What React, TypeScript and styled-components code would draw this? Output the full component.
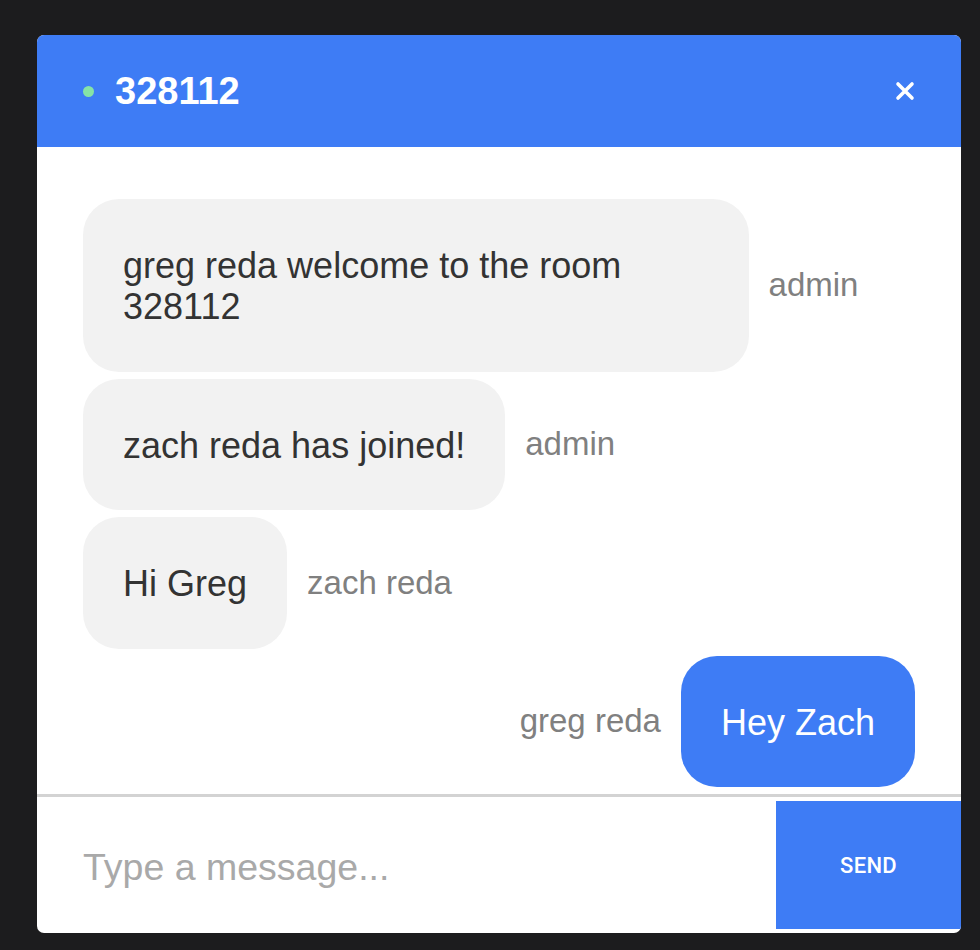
import React from "react";
import styled, { createGlobalStyle } from "styled-components";

const GlobalStyle = createGlobalStyle`
  html, body {
    margin: 0;
    padding: 0;
    background: #1c1c1e;
    font-family: "Liberation Sans", Arial, sans-serif;
  }
  * { box-sizing: border-box; }
`;

const Page = styled.div`
  padding: 35px 19px 17px 37px;
  min-height: 950px;
`;

const Card = styled.div`
  width: 924px;
  height: 898px;
  background: #ffffff;
  border-radius: 7px;
  overflow: hidden;
  display: flex;
  flex-direction: column;
`;

const Header = styled.header`
  height: 112px;
  flex: none;
  background: #3e7cf5;
  display: flex;
  align-items: center;
  padding: 0 46px 0 46px;
`;

const StatusDot = styled.span`
  width: 11px;
  height: 11px;
  border-radius: 50%;
  background: #86e3a6;
  margin-right: 21px;
  flex: none;
`;

const Title = styled.h1`
  margin: 0;
  flex: 1;
  color: #ffffff;
  font-size: 38px;
  font-weight: 700;
  line-height: 1;
`;

const CloseButton = styled.button`
  border: none;
  background: none;
  padding: 0;
  width: 20px;
  height: 20px;
  display: flex;
  align-items: center;
  justify-content: center;
  cursor: pointer;
`;

const Messages = styled.div`
  flex: 1;
  display: flex;
  flex-direction: column;
  gap: 7px;
  padding: 52px 46px 6px;
  overflow: hidden;
`;

const Row = styled.div<{ $own?: boolean }>`
  display: flex;
  align-items: center;
  gap: 20px;
  justify-content: ${(p) => (p.$own ? "flex-end" : "flex-start")};
`;

const Bubble = styled.div<{ $own?: boolean }>`
  max-width: 80%;
  padding: 46px 40px 44px;
  border-radius: 36px;
  font-size: 36px;
  line-height: 1.15;
  background: ${(p) => (p.$own ? "#3e7cf5" : "#f2f2f2")};
  color: ${(p) => (p.$own ? "#ffffff" : "#333333")};
`;

const Sender = styled.span`
  font-size: 33px;
  color: #808080;
  white-space: nowrap;
`;

const Footer = styled.form`
  flex: none;
  border-top: 3px solid #d3d3d3;
  padding: 4px 0 4px 0;
  display: flex;
  align-items: stretch;
`;

const Input = styled.input`
  flex: 1;
  min-width: 0;
  border: none;
  outline: none;
  padding: 4px 20px 0 46px;
  font-family: "Liberation Sans", Arial, sans-serif;
  font-size: 37.5px;
  color: #333333;
  caret-color: #000000;
  background: transparent;
  &::placeholder {
    color: #a9a9a9;
  }
`;

const SendButton = styled.button`
  width: 185px;
  height: 128px;
  flex: none;
  border: none;
  background: #3e7cf5;
  color: #ffffff;
  font-family: Roboto, "Liberation Sans", Arial, sans-serif;
  font-weight: 500;
  font-size: 22px;
  letter-spacing: 0.3px;
  cursor: pointer;
`;

type Msg = { text: string; user: string; own?: boolean };

const messages: Msg[] = [
  { text: "greg reda welcome to the room 328112", user: "admin" },
  { text: "zach reda has joined!", user: "admin" },
  { text: "Hi Greg", user: "zach reda" },
  { text: "Hey Zach", user: "greg reda", own: true },
];

export default function App() {
  return (
    <>
      <GlobalStyle />
      <Page>
        <Card>
          <Header>
            <StatusDot />
            <Title>328112</Title>
            <CloseButton aria-label="close">
              <svg width="20" height="20" viewBox="0 0 20 20">
                <path
                  d="M3 3 L17 17 M17 3 L3 17"
                  stroke="#ffffff"
                  strokeWidth="3.6"
                  strokeLinecap="round"
                />
              </svg>
            </CloseButton>
          </Header>
          <Messages>
            {messages.map((m, i) => (
              <Row key={i} $own={m.own}>
                {m.own && <Sender>{m.user}</Sender>}
                <Bubble $own={m.own}>{m.text}</Bubble>
                {!m.own && <Sender>{m.user}</Sender>}
              </Row>
            ))}
          </Messages>
          <Footer onSubmit={(e) => e.preventDefault()}>
            <Input placeholder="Type a message..." autoFocus />
            <SendButton type="submit">SEND</SendButton>
          </Footer>
        </Card>
      </Page>
    </>
  );
}
